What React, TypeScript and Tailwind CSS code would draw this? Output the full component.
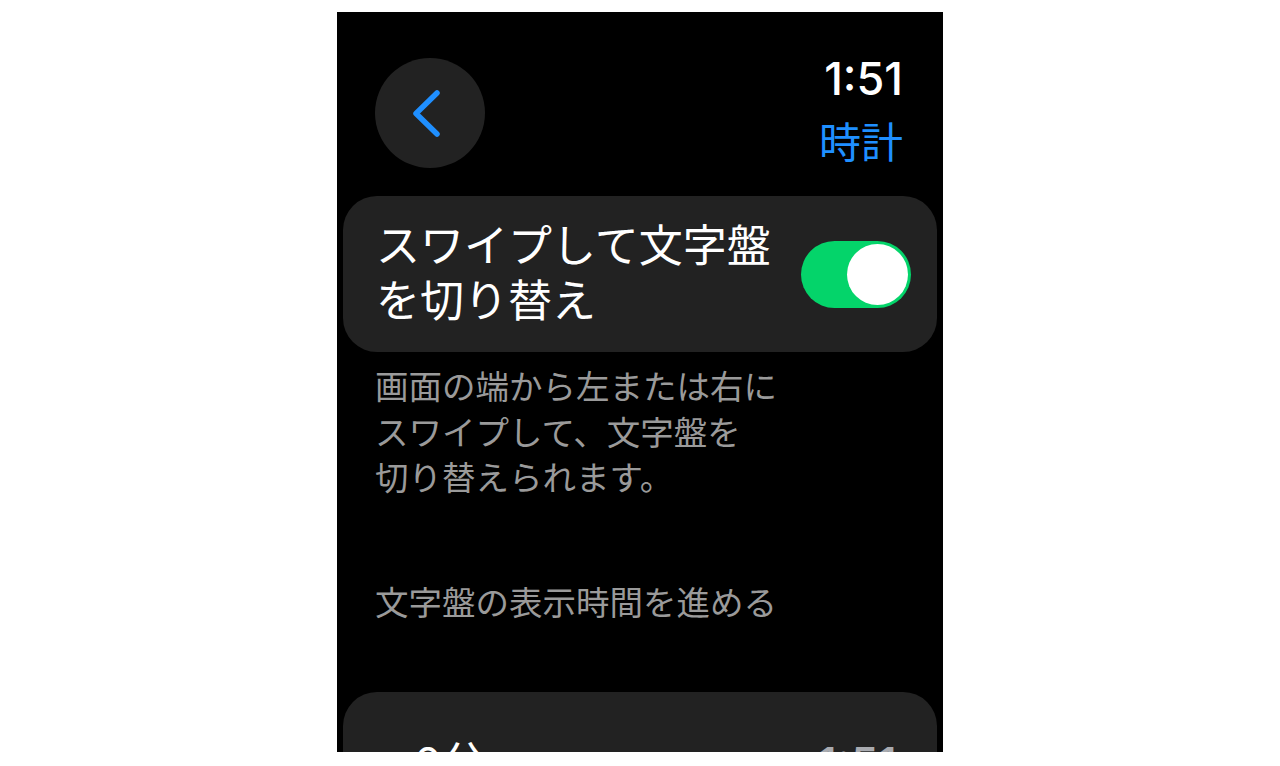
import React from "react";

const FONT = { fontFamily: '"Inter", "Noto Sans CJK JP", sans-serif' };

function BackChevron() {
  return (
    <svg width="110" height="110" viewBox="0 0 110 110" fill="none">
      <polyline
        points="62,35 41,55.5 62,76"
        stroke="#1f8fff"
        strokeWidth="5.5"
        strokeLinecap="round"
        strokeLinejoin="round"
      />
    </svg>
  );
}

function Toggle() {
  return (
    <div className="w-[110px] h-[67px] shrink-0 rounded-full bg-[#04d46a] flex items-center justify-end pr-[3px]">
      <div className="w-[61px] h-[61px] rounded-full bg-white" />
    </div>
  );
}

export default function App() {
  return (
    <div className="w-full min-h-[766px] bg-white flex justify-center" style={FONT}>
      <div className="mt-[12px] w-[606px] h-[740px] bg-black overflow-hidden flex flex-col">
        {/* Header */}
        <div className="h-[184px] shrink-0 flex justify-between pl-[38px] pr-[40px]">
          <div className="mt-[46px] w-[110px] h-[110px] rounded-full bg-[#222222] flex items-center justify-center">
            <BackChevron />
          </div>
          <div className="flex flex-col items-end pt-[40px]">
            <div className="text-[45px] leading-[54px] font-medium text-white">1:51</div>
            <div className="mt-[13px] text-[42px] leading-[48px] text-[#1f8fff]">時計</div>
          </div>
        </div>

        {/* Toggle card */}
        <div className="mx-[6px] shrink-0 rounded-[34px] bg-[#222222] pl-[33px] pr-[26px] py-[23px] flex items-center justify-between">
          <div className="text-[44px] leading-[55px] text-white">
            <div>スワイプして文字盤</div>
            <div>を切り替え</div>
          </div>
          <Toggle />
        </div>

        {/* Description */}
        <div className="mt-[13px] px-[38px] text-[33.5px] leading-[45.5px] text-[#9a9a9a]">
          <div>画面の端から左または右に</div>
          <div>スワイプして、文字盤を</div>
          <div>切り替えられます。</div>
        </div>

        <div className="mt-[79px] px-[38px] text-[33.5px] leading-[45.5px] text-[#9a9a9a]">
          文字盤の表示時間を進める
        </div>

        {/* Time card */}
        <div className="mt-[66px] mx-[6px] shrink-0 h-[200px] rounded-[34px] bg-[#222222] pl-[42px] pr-[40px] pt-[44px] flex justify-between">
          <div className="text-[44px] leading-[55px] text-white">+0分</div>
          <div className="text-[45px] leading-[55px] font-medium text-[#a9abb0]">1:51</div>
        </div>
      </div>
    </div>
  );
}
